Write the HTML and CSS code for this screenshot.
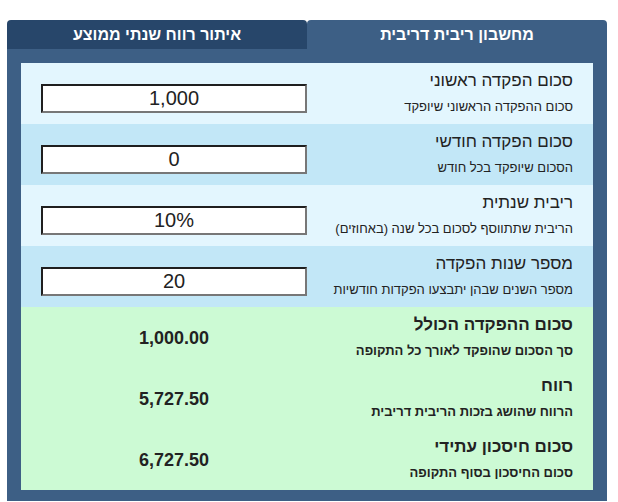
FILE: index.html
```html
<!DOCTYPE html>
<html lang="he" dir="rtl">
<head>
    <meta charset="UTF-8">
    <meta name="viewport" content="width=device-width, initial-scale=1.0">
    <title>מחשבון ריבית דריבית</title>
    <link rel="stylesheet" href="styles.css">
</head>
<body>
    <div class="calc">
        <div class="tabs">
            <div class="tab active">מחשבון ריבית דריבית</div>
            <div class="tab">איתור רווח שנתי ממוצע</div>
        </div>
        <div class="panel">
            <div class="row light">
                <div class="label">
                    <div class="title">סכום הפקדה ראשוני</div>
                    <div class="desc">סכום ההפקדה הראשוני שיופקד</div>
                </div>
                <div class="field"><input type="text" id="initial" value="1,000"></div>
            </div>
            <div class="row dark">
                <div class="label">
                    <div class="title">סכום הפקדה חודשי</div>
                    <div class="desc">הסכום שיופקד בכל חודש</div>
                </div>
                <div class="field"><input type="text" id="monthly" value="0"></div>
            </div>
            <div class="row light">
                <div class="label">
                    <div class="title">ריבית שנתית</div>
                    <div class="desc">הריבית שתתווסף לסכום בכל שנה (באחוזים)</div>
                </div>
                <div class="field"><input type="text" id="rate" value="10%"></div>
            </div>
            <div class="row dark">
                <div class="label">
                    <div class="title">מספר שנות הפקדה</div>
                    <div class="desc">מספר השנים שבהן יתבצעו הפקדות חודשיות</div>
                </div>
                <div class="field"><input type="text" id="years" value="20"></div>
            </div>

            <div class="results">
                <div class="row">
                    <div class="label">
                        <div class="title">סכום ההפקדה הכולל</div>
                        <div class="desc">סך הסכום שהופקד לאורך כל התקופה</div>
                    </div>
                    <div class="value">1,000.00</div>
                </div>
                <div class="row">
                    <div class="label">
                        <div class="title">רווח</div>
                        <div class="desc">הרווח שהושג בזכות הריבית דריבית</div>
                    </div>
                    <div class="value">5,727.50</div>
                </div>
                <div class="row">
                    <div class="label">
                        <div class="title">סכום חיסכון עתידי</div>
                        <div class="desc">סכום החיסכון בסוף התקופה</div>
                    </div>
                    <div class="value">6,727.50</div>
                </div>
            </div>
        </div>
    </div>
</body>
</html>
```
FILE: styles.css
```css
body {
    margin: 0;
    font-family: Arial, "Liberation Sans", sans-serif;
    color: #222;
    background-color: #ffffff;
}

.calc {
    width: 600px;
    margin: 20px 11px 0 7px; /* page is rtl, so the right margin places it */
}

.tabs {
    display: flex;
}

.tab {
    flex: 1;
    height: 29px;
    line-height: 29px;
    text-align: center;
    font-size: 16px;
    font-weight: bold;
    color: #ffffff;
    background-color: #27466a;
    border-radius: 4px 4px 0 0;
}

.tab.active {
    background-color: #3d5f85;
}

.panel {
    background-color: #3d5f85;
    padding: 14px 14px 11px;
}

.row {
    display: grid;
    grid-template-columns: 1fr 1fr;
    padding: 8px 20px 7px;
}

.row.light {
    background-color: #e3f6fe;
}

.row.dark {
    background-color: #c2e7f7;
}

.title {
    font-size: 17px;
    line-height: 20px;
}

.desc {
    font-size: 13px;
    line-height: 20px;
    margin-top: 6px;
}

.field {
    align-self: center;
    margin-top: 8px;
}

input {
    display: block;
    width: 100%;
    height: 29px;
    box-sizing: border-box;
    padding: 0;
    margin: 0;
    font-family: Arial, "Liberation Sans", sans-serif;
    font-size: 20px;
    color: #222;
    text-align: center;
    background-color: #ffffff;
    border-style: solid;
    border-width: 2px;
    border-color: #1f1f1f #777 #777 #1f1f1f;
    border-radius: 0;
    outline: none;
}

.results {
    background-color: #ccfad4;
}

.results .label {
    font-weight: bold;
}

.value {
    align-self: center;
    text-align: center;
    font-size: 18px;
    font-weight: bold;
}
```
